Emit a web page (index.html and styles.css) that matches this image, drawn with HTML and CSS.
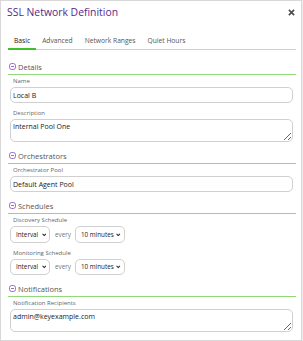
FILE: index.html
```html
<!DOCTYPE html>
<html lang="en">
  <head>
    <meta charset="UTF-8" />
    <meta name="viewport" content="width=device-width, initial-scale=1.0" />
    <title>SSL Network Definition</title>
    <link rel="stylesheet" href="styles.css">
  </head>
  <body>
    <div class="modal">
      <div class="modal-header">
        <h2 class="modal-title">SSL Network Definition</h2>
        <svg class="close" viewBox="0 0 8 8"><path d="M1 1l6 6M7 1l-6 6"></path></svg>
      </div>

      <ul class="tabs">
        <li class="tab active">Basic</li>
        <li class="tab">Advanced</li>
        <li class="tab">Network Ranges</li>
        <li class="tab">Quiet Hours</li>
      </ul>

      <div class="section first">
        <div class="section-header">
          <svg class="toggle" viewBox="0 0 7 7"><rect x="0.5" y="0.5" width="6" height="6" rx="2.2"></rect><line x1="2" y1="3.5" x2="5" y2="3.5"></line></svg>
          <span>Details</span>
        </div>
        <div class="field">
          <label for="name">Name</label>
          <input id="name" type="text" value="Local B" />
        </div>
        <div class="field">
          <label for="description">Description</label>
          <textarea id="description">Internal Pool One</textarea>
        </div>
      </div>

      <div class="section">
        <div class="section-header">
          <svg class="toggle" viewBox="0 0 7 7"><rect x="0.5" y="0.5" width="6" height="6" rx="2.2"></rect><line x1="2" y1="3.5" x2="5" y2="3.5"></line></svg>
          <span>Orchestrators</span>
        </div>
        <div class="field">
          <label for="pool">Orchestrator Pool</label>
          <input id="pool" type="text" value="Default Agent Pool" />
        </div>
      </div>

      <div class="section">
        <div class="section-header">
          <svg class="toggle" viewBox="0 0 7 7"><rect x="0.5" y="0.5" width="6" height="6" rx="2.2"></rect><line x1="2" y1="3.5" x2="5" y2="3.5"></line></svg>
          <span>Schedules</span>
        </div>
        <div class="field">
          <label>Discovery Schedule</label>
          <div class="schedule-row">
            <span class="select short">
              <select><option>Interval</option></select>
              <svg class="chevron" viewBox="0 0 8 5"><path d="M1 1l3 3 3-3"></path></svg>
            </span>
            <span class="every">every</span>
            <span class="select long">
              <select><option>10 minutes</option></select>
              <svg class="chevron" viewBox="0 0 8 5"><path d="M1 1l3 3 3-3"></path></svg>
            </span>
          </div>
        </div>
        <div class="field">
          <label>Monitoring Schedule</label>
          <div class="schedule-row">
            <span class="select short">
              <select><option>Interval</option></select>
              <svg class="chevron" viewBox="0 0 8 5"><path d="M1 1l3 3 3-3"></path></svg>
            </span>
            <span class="every">every</span>
            <span class="select long">
              <select><option>10 minutes</option></select>
              <svg class="chevron" viewBox="0 0 8 5"><path d="M1 1l3 3 3-3"></path></svg>
            </span>
          </div>
        </div>
      </div>

      <div class="section">
        <div class="section-header">
          <svg class="toggle" viewBox="0 0 7 7"><rect x="0.5" y="0.5" width="6" height="6" rx="2.2"></rect><line x1="2" y1="3.5" x2="5" y2="3.5"></line></svg>
          <span>Notifications</span>
        </div>
        <div class="field">
          <label for="recipients">Notification Recipients</label>
          <textarea id="recipients">admin@keyexample.com</textarea>
        </div>
      </div>
    </div>
  </body>
</html>
```

FILE: styles.css
```css
body {
  margin: 0;
  background-color: #ececec;
  font-family: "Open Sans", "Liberation Sans", sans-serif;
  color: #333;
}
.modal {
  width: 300px;
  height: 339px;
  background-color: #fff;
  border: 1px solid #d8d8d8;
}
.modal-header {
  display: flex;
  justify-content: space-between;
  align-items: center;
  height: 16px;
  padding: 3px 5px 0 6px;
}
.modal-title {
  margin: 0;
  font-size: 10.4px;
  font-weight: 500;
  line-height: 16px;
  color: #56288a;
}
.close {
  width: 7px;
  height: 7px;
  margin-right: 1px;
  fill: none;
  stroke: #4a4a4a;
  stroke-width: 1.8;
}
.tabs {
  display: flex;
  list-style: none;
  margin: 16px 5px 0 7px;
  padding: 0;
  border-bottom: 1px solid #cfcfcf;
}
.tab {
  padding: 0 6px 2px;
  margin-bottom: -1px;
  font-size: 6.7px;
  line-height: 10px;
  color: #555;
  border-bottom: 2px solid transparent;
}
.tab.active {
  color: #222;
  border-bottom-color: #3fbf2a;
}
.section {
  margin: 6px 5px 0 7px;
}
.section.first {
  margin-top: 9px;
}
.section-header {
  display: flex;
  align-items: center;
  gap: 2px;
  height: 15px;
  padding-left: 1px;
  border-bottom: 1px solid #8fd97a;
  font-size: 7.5px;
  color: #555;
}
.toggle {
  width: 7px;
  height: 7px;
  fill: none;
  stroke: #8e5cc6;
  stroke-width: 0.9;
}
.field {
  padding: 0 3px 0 2px;
  margin-bottom: 4px;
}
.field label {
  display: block;
  height: 12px;
  padding-left: 3px;
  font-size: 6px;
  line-height: 13px;
  color: #666;
}
input,
textarea,
select {
  display: block;
  box-sizing: border-box;
  width: 100%;
  margin: 0;
  font-family: inherit;
  font-size: 7px;
  color: #222;
  background-color: #fff;
  border: 1px solid #d0d0d0;
  border-radius: 5px;
}
input {
  height: 16px;
  padding: 0 2px;
}
textarea {
  height: 23px;
  padding: 2px 2px;
  line-height: 9px;
  resize: vertical;
}
.schedule-row {
  display: flex;
  align-items: center;
}
.select {
  position: relative;
  display: flex;
  align-items: center;
}
.select.short {
  width: 40px;
}
.select.long {
  width: 50px;
}
select {
  appearance: none;
  -webkit-appearance: none;
  height: 16.5px;
  padding: 0 0 0 5px;
  font-size: 6.3px;
}
.chevron {
  position: absolute;
  right: 4px;
  top: 6.5px;
  width: 4.5px;
  height: 3.5px;
  fill: none;
  stroke: #222;
  stroke-width: 1.8;
}
.every {
  margin: 0 4px 0 5px;
  font-size: 6.3px;
  color: #777;
}
```
